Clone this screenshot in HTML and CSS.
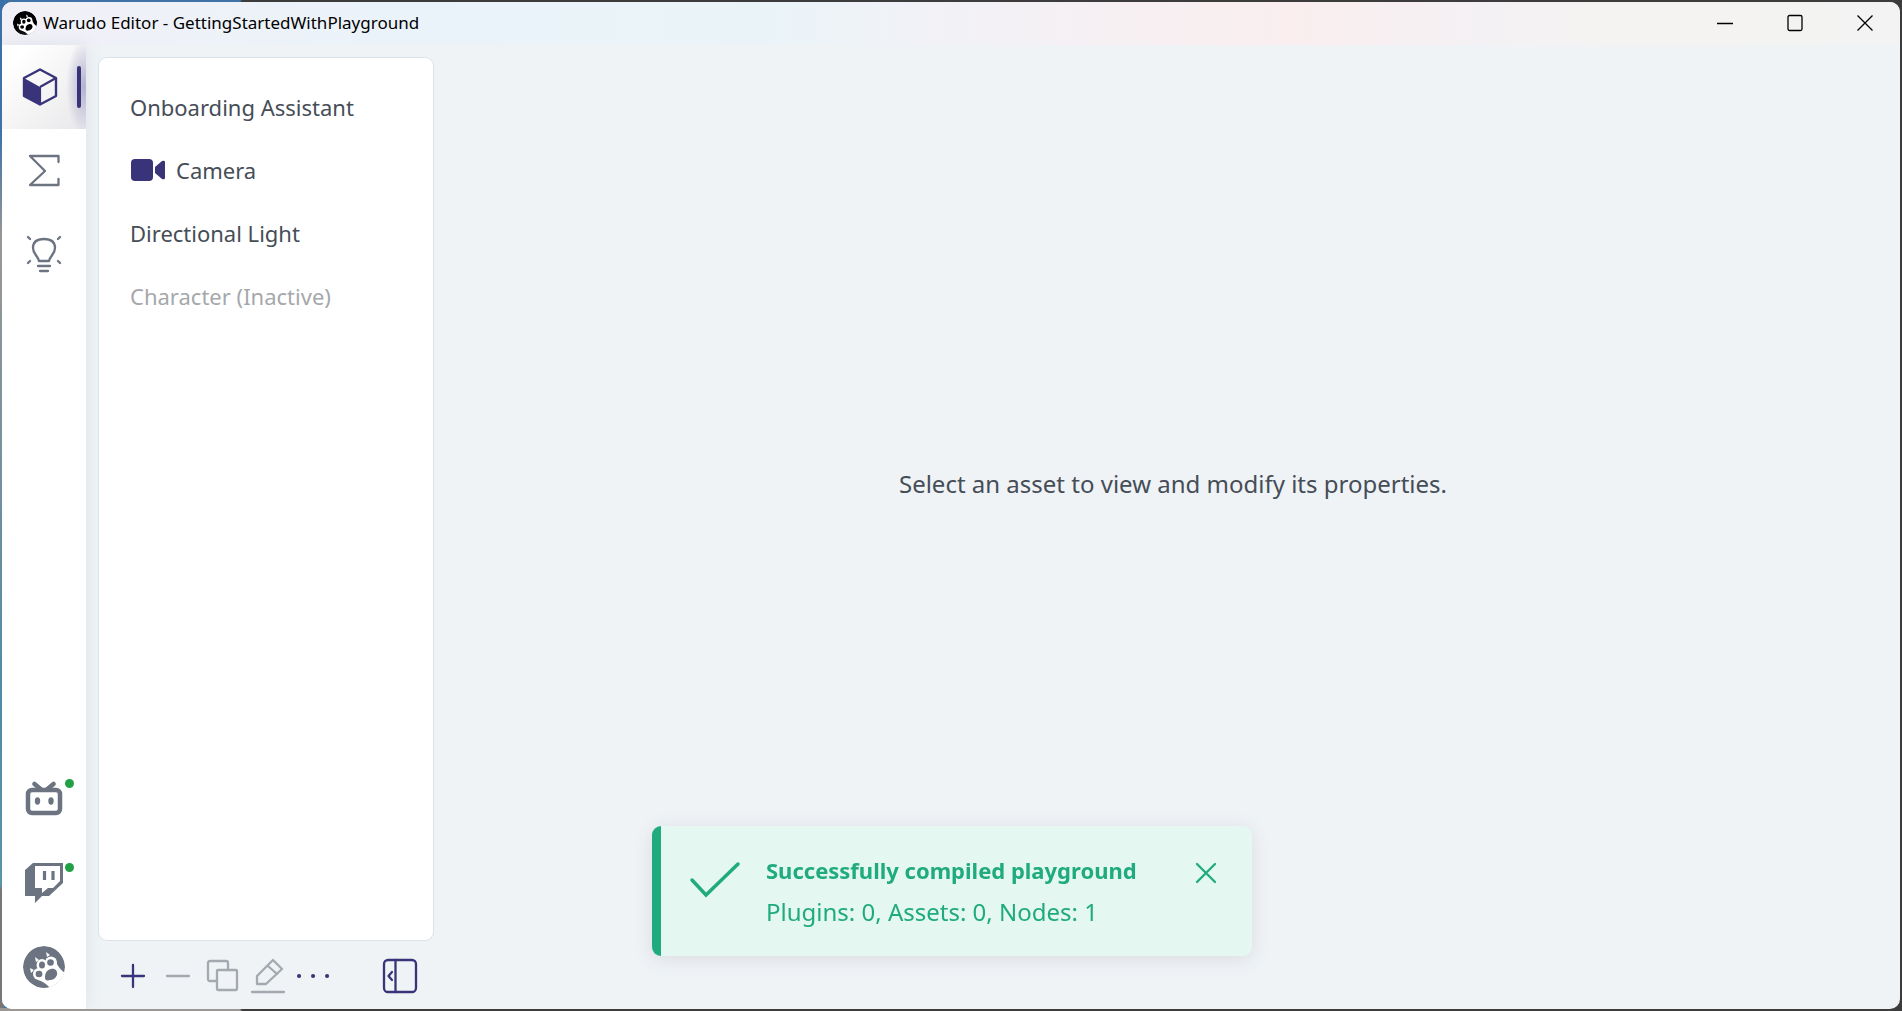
FILE: index.html
```html
<!DOCTYPE html>
<html lang="en">
<head>
<meta charset="utf-8">
<title>Warudo Editor - GettingStartedWithPlayground</title>
<link rel="stylesheet" href="styles.css">
</head>
<body>
<svg class="defs" width="0" height="0" aria-hidden="true">
  <symbol id="paw" viewBox="0 0 42 42">
    <circle cx="21" cy="21" r="21" fill="currentColor"/>
    <g class="fur"><ellipse cx="19" cy="19" rx="5.500" ry="6"/><ellipse cx="28" cy="16.500" rx="6" ry="6"/><ellipse cx="16" cy="28" rx="6" ry="6"/><path d="M15 33L20 20 33 16Q36 23 42 27V42H27Q22 36 15 34Z"/><path d="M7 22l4 2-3 3zM12 11l4 3-3 2zM23 6l4 3-3 2z"/></g>
    <g fill="currentColor"><ellipse cx="19" cy="19" rx="3" ry="3.500"/><ellipse cx="27.500" cy="16.500" rx="3.300" ry="3.200"/><ellipse cx="16" cy="28" rx="3.400" ry="3.200"/><path d="M22 32c0-4 1-8 6-9 4-1 7 2 6 6-1 3-4 5-7 5-3 1-5 0-5-2z"/></g>
  </symbol>
</svg>
<div class="window">
  <header class="titlebar">
    <svg class="logo" viewBox="0 0 42 42"><use href="#paw"/></svg>
    <h1 class="title">Warudo Editor - GettingStartedWithPlayground</h1>
    <div class="controls">
      <button class="control" type="button" aria-label="Minimize"><svg width="16" height="18" viewBox="0 0 16 18"><path d="M0 9.500H16"/></svg></button>
      <button class="control" type="button" aria-label="Maximize"><svg width="16" height="18" viewBox="0 0 16 18"><rect x="1" y="1.500" width="14" height="15" rx="1.500"/></svg></button>
      <button class="control" type="button" aria-label="Close"><svg width="16" height="18" viewBox="0 0 16 18"><path d="M.5 1.500l15 15M15.500 1.500l-15 15"/></svg></button>
    </div>
  </header>
  <div class="body">
    <nav class="sidebar">
      <button class="tab active" type="button" aria-label="Assets"><svg width="36" height="40" viewBox="0 0 36 40"><path d="M18 2.500L34 11V29L18 37.500 2 29V11Z" fill="none" stroke="#39347a" stroke-width="2.400" stroke-linejoin="round"/><path d="M2 11L18 20V37.500L2 29Z" fill="#39347a"/><path d="M18 20L34 11M18 20V37" fill="none" stroke="#39347a" stroke-width="2.200"/></svg></button>
      <button class="tab" type="button" aria-label="Blueprints"><svg class="line" width="36" height="36" viewBox="0 0 36 36"><path d="M32.500 9V3H4L19 18 4 32H32.500V26"/></svg></button>
      <button class="tab" type="button" aria-label="Tips"><svg class="line" width="36" height="40" viewBox="0 0 36 40"><path d="M13 26C12 21 7 19 7 13 7 6 12 4 18 4S29 6 29 13C29 19 24 21 23 26ZM12 31H24M14 36H22M2 2l2 2M34 2l-2 2M2 28l2-2M34 28l-2-2"/></svg></button>
      <span class="grow"></span>
      <button class="tab" type="button" aria-label="Bilibili"><svg width="38" height="36" viewBox="0 0 38 36"><rect x="3" y="9" width="32" height="23" rx="4" fill="none" stroke="#6b7480" stroke-width="4.500"/><path d="M9.500 3l6 5M28.500 3l-6 5" stroke="#6b7480" stroke-width="4.500" stroke-linecap="round"/><ellipse cx="12.500" cy="20" rx="2.700" ry="3.700" fill="#6b7480"/><ellipse cx="26" cy="20" rx="2.700" ry="3.700" fill="#6b7480"/></svg><i class="dot"></i></button>
      <button class="tab" type="button" aria-label="Twitch"><svg width="38" height="40" viewBox="0 0 38 40"><path fill="#6b7480" fill-rule="evenodd" d="M8 0H38V20L24 33H17L10 40V33H0V7ZM10 3V25H17V30L23 25H28L35 18V3Z"/><path d="M19.500 8v9M28 8v9" stroke="#6b7480" stroke-width="3.200"/></svg><i class="dot"></i></button>
      <button class="tab brand" type="button" aria-label="Warudo"><svg width="42" height="42" viewBox="0 0 42 42"><use href="#paw"/></svg></button>
    </nav>
    <section class="assets">
      <ul class="list">
        <li class="item">Onboarding Assistant</li>
        <li class="item"><svg width="35" height="24" viewBox="0 0 35 24"><rect x="1" y="1" width="22" height="22" rx="4" fill="#39347a"/><path fill="#39347a" d="M25 9l7-6q3-1 3 1v16q0 2-3 1l-7-6z"/></svg>Camera</li>
        <li class="item">Directional Light</li>
        <li class="item inactive">Character (Inactive)</li>
      </ul>
      <div class="toolbar">
        <button class="tool" type="button" aria-label="Add"><svg width="36" height="36" viewBox="0 0 36 36"><path d="M18 7V29M7 18H29"/></svg></button>
        <button class="tool" type="button" aria-label="Remove" disabled><svg width="36" height="36" viewBox="0 0 36 36"><path d="M7 18H29"/></svg></button>
        <button class="tool" type="button" aria-label="Duplicate" disabled><svg width="36" height="36" viewBox="0 0 36 36"><path d="M12 23H5Q3 23 3 21V5Q3 3 5 3H21Q23 3 23 5V12"/><rect x="12" y="12" width="20" height="20" rx="1"/></svg></button>
        <button class="tool" type="button" aria-label="Rename" disabled><svg width="36" height="36" viewBox="0 0 36 36"><path d="M2 34H34M7 26V18L23 2 32 11 16 26ZM18 8L27 16"/></svg></button>
        <button class="tool" type="button" aria-label="More"><svg width="36" height="36" viewBox="0 0 36 36"><path d="M4 18h.1M18 18h.1M32 18h.1" stroke-width="4"/></svg></button>
        <span class="grow"></span>
        <button class="tool" type="button" aria-label="Collapse panel"><svg width="36" height="36" viewBox="0 0 36 36"><rect x="2" y="2" width="32" height="32" rx="4"/><path d="M13.500 2V34M10 14L6.500 18 10 22"/></svg></button>
      </div>
    </section>
    <main class="main"><p class="hint">Select an asset to view and modify its properties.</p></main>
  </div>
</div>
<div class="toast" role="status">
  <svg class="check" width="52" height="40" viewBox="0 0 52 40"><path d="M3 21L17 36 49 5"/></svg>
  <div class="message"><strong class="message-title">Successfully compiled playground</strong><p class="message-text">Plugins: 0, Assets: 0, Nodes: 1</p></div>
  <button class="dismiss" type="button" aria-label="Dismiss"><svg width="22" height="22" viewBox="0 0 22 22"><path d="M2 2L20 20M20 2L2 20"/></svg></button>
</div>
</body>
</html>
```
FILE: styles.css
```css
* { box-sizing: border-box; }
body {
  margin: 0;
  height: 100vh;
  padding: 2px;
  background:
    linear-gradient(90deg, #9a9795 0, #9a9795 240px, #3c3c3c 242px) left bottom / 100% 3px no-repeat,
    linear-gradient(#3c70a8, #3f73a8 135px, #9a9795 240px, #4f8aa8 700px, #5d93a8 885px, #777 890px) left top / 4px 100% no-repeat,
    linear-gradient(90deg, #3f73a8 0, #3f73a8 240px, #3c3c3c 242px);
  font-family: "Noto Sans", sans-serif;
  font-size: 22px;
  color: #454d57;
}
button { margin: 0; padding: 0; border: 0; background: none; font: inherit; }
svg { display: block; flex: none; }
.defs { position: absolute; }
.window {
  height: 100%;
  display: flex;
  flex-direction: column;
  overflow: hidden;
  border-radius: 10px;
  background: #eff3f6;
}
.titlebar {
  height: 43px;
  flex: none;
  display: flex;
  align-items: center;
  padding: 0 0 2px 11px;
  background: linear-gradient(90deg, #f2f0f7, #eaf3fa 22%, #eaf4f8 40%, #f1f2f7 48%, #faeeef 68%, #f4f1f4 78%, #f4f3f1 85%, #f3f3f3);
}
.logo { width: 24px; height: 24px; color: #000; }
.logo, .brand svg { border-radius: 50%; overflow: hidden; }
.brand { color: #6b7480; }
.fur { fill: #fff; }
.title { margin: 0 0 0 6px; font: 17px/24px "Noto Sans", sans-serif; color: #000; }
.controls { display: flex; height: 100%; margin-left: auto; }
.control { width: 70px; display: flex; align-items: center; justify-content: center; }
.control svg { fill: none; stroke: #000; stroke-width: 1.300; }
.body { flex: 1; display: flex; min-height: 0; }
.sidebar { width: 84px; flex: none; display: flex; flex-direction: column; background: #fff; box-shadow: 0 0 16px #dde2e8; }
.tab { position: relative; height: 84px; display: flex; align-items: center; justify-content: center; }
.active {
  padding-right: 8px;
  background: radial-gradient(ellipse 18px 48px at 82px 42px, #b4b1cf, transparent), linear-gradient(135deg, #fff 15%, #e8e8ea);
}
.active::after { content: ""; position: absolute; right: 5px; top: 21px; width: 4px; height: 42px; border-radius: 2px; background: #39347a; }
.line { fill: none; stroke: #6b7480; stroke-width: 2.300; stroke-linecap: round; stroke-linejoin: round; }
.grow { flex: 1; }
.dot { position: absolute; right: 12px; top: 22px; width: 9px; height: 9px; border-radius: 50%; background: #22a045; }
.assets { width: 360px; flex: none; display: flex; flex-direction: column; padding: 12px 12px 0; }
.list { flex: 1; margin: 0; padding: 17px 31px; list-style: none; border: 1px solid #dae2ea; border-radius: 9px; background: #fff; }
.item { height: 63px; display: flex; align-items: center; gap: 11px; white-space: nowrap; }
.inactive { color: #a5a8ab; }
.toolbar { height: 68px; display: flex; align-items: center; gap: 9px; padding: 2px 16px 0 17px; }
.tool { color: #39347a; }
.tool:disabled { color: #a3a9ae; }
.tool svg { fill: none; stroke: currentColor; stroke-width: 2.300; stroke-linecap: round; stroke-linejoin: round; }
.main { flex: 1; display: flex; align-items: center; justify-content: center; padding-bottom: 88px; }
.hint { margin: 0; font-size: 24px; }
.toast {
  position: fixed;
  left: 50%;
  bottom: 55px;
  width: 600px;
  margin-left: -299px;
  display: flex;
  align-items: flex-start;
  padding: 24px 35px 24px 28px;
  border-left: 9px solid #1fab7d;
  border-radius: 9px;
  background: #e4f7f1;
  box-shadow: 0 3px 18px #d9dce0;
  color: #1fab7d;
}
.toast svg { fill: none; stroke: currentColor; stroke-linecap: round; stroke-width: 2.300; }
.toast .check { margin-top: 9px; stroke-width: 3.500; }
.message { flex: 1; margin-left: 25px; }
.message-title { display: block; line-height: 41px; }
.message-text { margin: 0; font-size: 24px; line-height: 41px; }
.dismiss { margin-top: 12px; color: inherit; }
```
